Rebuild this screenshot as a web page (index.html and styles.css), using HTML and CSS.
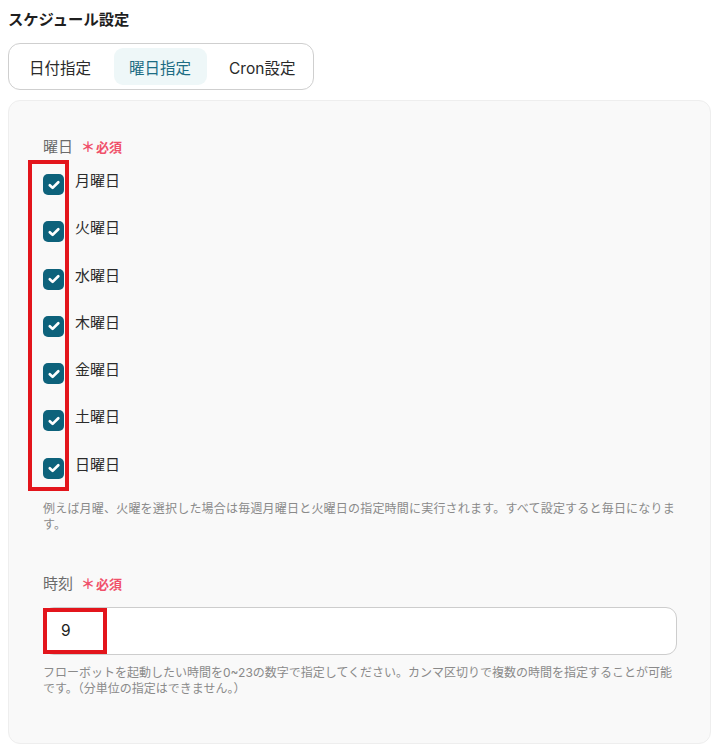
FILE: index.html
```html
<!DOCTYPE html>
<html lang="ja">
<head>
<meta charset="utf-8">
<link rel="stylesheet" href="styles.css">
</head>
<body>
<div class="page">
  <h2 class="title">スケジュール設定</h2>
  <div class="tabs">
    <div class="tab">日付指定</div>
    <div class="tab active">曜日指定</div>
    <div class="tab">Cron設定</div>
  </div>
  <div class="panel">
    <div class="field">
      <div class="label">曜日 <span class="req"><span class="ast">＊</span>必須</span></div>
      <div class="days">
        <div class="hl hl-days"></div>
        <label class="day"><span class="cb"><svg viewBox="0 0 20 20"><path d="M5.8 10.2l2.8 2.7L14.3 7.3" /></svg></span><span class="dname">月曜日</span></label>
        <label class="day"><span class="cb"><svg viewBox="0 0 20 20"><path d="M5.8 10.2l2.8 2.7L14.3 7.3" /></svg></span><span class="dname">火曜日</span></label>
        <label class="day"><span class="cb"><svg viewBox="0 0 20 20"><path d="M5.8 10.2l2.8 2.7L14.3 7.3" /></svg></span><span class="dname">水曜日</span></label>
        <label class="day"><span class="cb"><svg viewBox="0 0 20 20"><path d="M5.8 10.2l2.8 2.7L14.3 7.3" /></svg></span><span class="dname">木曜日</span></label>
        <label class="day"><span class="cb"><svg viewBox="0 0 20 20"><path d="M5.8 10.2l2.8 2.7L14.3 7.3" /></svg></span><span class="dname">金曜日</span></label>
        <label class="day"><span class="cb"><svg viewBox="0 0 20 20"><path d="M5.8 10.2l2.8 2.7L14.3 7.3" /></svg></span><span class="dname">土曜日</span></label>
        <label class="day"><span class="cb"><svg viewBox="0 0 20 20"><path d="M5.8 10.2l2.8 2.7L14.3 7.3" /></svg></span><span class="dname">日曜日</span></label>
      </div>
      <p class="help help-days">例えば月曜、火曜を選択した場合は毎週月曜日と火曜日の指定時間に実行されます。すべて設定すると毎日になります。</p>
    </div>
    <div class="field field-time">
      <div class="label">時刻 <span class="req"><span class="ast">＊</span>必須</span></div>
      <div class="input-wrap">
        <div class="input">9</div>
        <div class="hl hl-input"></div>
      </div>
      <p class="help help-time">フローボットを起動したい時間を0~23の数字で指定してください。カンマ区切りで複数の時間を指定することが可能です。（分単位の指定はできません。）</p>
    </div>
  </div>
</div>
</body>
</html>
```
FILE: styles.css
```css
* { box-sizing: border-box; }
html, body { margin: 0; padding: 0; background: #fff; }
body {
  font-family: "Inter", "Noto Sans CJK JP", sans-serif;
  color: #222;
}
.page {
  padding: 10px 14px 12px 8px;
  width: 725px;
}
.title {
  margin: 0;
  font-size: 15.3px;
  line-height: 20px;
  font-weight: 700;
  color: #1f1f1f;
}
.tabs {
  display: inline-flex;
  gap: 7px;
  margin-top: 13px;
  padding: 4px 2px 4px 5px;
  border: 1px solid #cfcfcf;
  border-radius: 12px;
  background: #fff;
}
.tab {
  height: 37px;
  padding: 0 16px 0 15px;
  display: flex;
  align-items: center;
  font-size: 15.5px;
  color: #2a2a2a;
  border-radius: 9px;
}
.tab.active {
  background: #eef7f8;
  color: #1c6c83;
}
.panel {
  margin-top: 10px;
  background: #f9f9f9;
  border: 1px solid #eeeeee;
  border-radius: 12px;
  padding: 36px 33px 46px 34px;
}
.label {
  font-size: 15px;
  line-height: 20px;
  color: #6b6b6b;
  display: flex;
  align-items: center;
  gap: 8px;
}
.req {
  color: #f0506a;
  font-size: 13px;
  font-weight: 700;
  display: inline-flex;
  align-items: center;
}
.ast {
  font-size: 14px;
  font-weight: 700;
  margin-right: 1px;
}
.days {
  position: relative;
  margin-top: 12px;
  display: flex;
  flex-direction: column;
  gap: 23.3px;
}
.day {
  display: flex;
  align-items: flex-start;
  gap: 11px;
  height: 24px;
}
.cb {
  width: 21px;
  height: 21px;
  margin-top: 5px;
  border-radius: 5px;
  background: #0d627b;
  display: flex;
  align-items: center;
  justify-content: center;
  flex: none;
}
.cb svg {
  width: 20px;
  height: 20px;
  fill: none;
  stroke: #fff;
  stroke-width: 2.7;
  stroke-linecap: round;
  stroke-linejoin: round;
}
.dname {
  font-size: 15px;
  line-height: 24px;
  color: #2b2b2b;
}
.hl {
  position: absolute;
  border: 4px solid #e3151c;
  pointer-events: none;
}
.hl-days {
  left: -15px;
  top: -9px;
  width: 41px;
  height: 331px;
}
.help {
  margin: 0;
  font-size: 12px;
  line-height: 16px;
  color: #8a8a8a;
}
.help-days { margin-top: 24px; letter-spacing: 0.2px; }
.field-time { margin-top: 41px; }
.input-wrap {
  position: relative;
  margin-top: 13px;
}
.input {
  height: 48px;
  background: #fff;
  border: 1px solid #cdcdcd;
  border-radius: 11px;
  padding: 0 17px;
  display: flex;
  align-items: center;
  font-size: 15.5px;
  color: #222;
}
.hl-input {
  left: 0;
  top: 1px;
  width: 64px;
  height: 46px;
}
.help-time { margin-top: 10px; letter-spacing: 0; }
```
